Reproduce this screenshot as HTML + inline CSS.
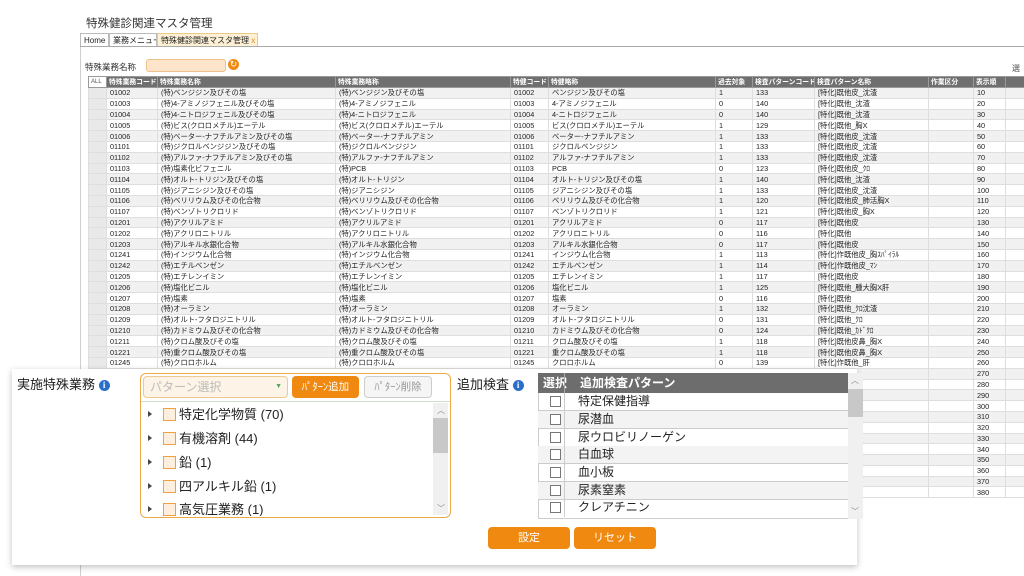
<!DOCTYPE html>
<html><head><meta charset="utf-8"><style>
*{box-sizing:border-box;margin:0;padding:0}
body{width:1024px;height:576px;overflow:hidden;background:#fff;font-family:"Liberation Sans","Noto Sans CJK JP",sans-serif;position:relative;color:#222}
.abs{position:absolute}
#title{left:86px;top:15px;font-size:11.5px;color:#333}
#win{left:80px;top:45px;width:944px;height:531px;border-left:1px solid #cfcfcf}
.tab{position:absolute;top:33px;height:14px;font-size:8px;line-height:13px;padding:0 3px;border:1px solid #bbb;border-bottom:none;background:#fff;white-space:nowrap;overflow:hidden}
#grid{position:absolute;left:88px;top:76px;border-collapse:collapse;table-layout:fixed;width:936px;font-size:7.3px}
#grid td{height:10.8px;line-height:9px;padding:0 3px;border:1px solid #dedede;white-space:nowrap;overflow:hidden}
#grid tr:nth-child(even) td{background:#f1f1f1}
#grid tr.h td{background:#6f6f6f;color:#fff;font-weight:bold;height:11px;border-color:#999;font-size:6.8px;padding:0 2px}
#grid td.rh{background:#e9e9e9!important}
#panel{left:12px;top:369px;width:845px;height:196px;background:#fff;box-shadow:0 2px 6px rgba(0,0,0,.25)}
.lbl{font-size:13px;color:#222}
.info{display:inline-block;width:11px;height:11px;border-radius:50%;background:#2a6fc9;color:#fff;font-size:9px;line-height:11px;text-align:center;font-weight:bold;vertical-align:1px;font-family:"Liberation Serif",serif}
.ob{background:#f0890f;color:#fff;border-radius:4px;text-align:center;font-size:11px}
.tr{position:absolute;font-size:13px;height:16px;line-height:16px}
.tr i{display:inline-block;width:0;height:0;border-left:4px solid #444;border-top:3.5px solid transparent;border-bottom:3.5px solid transparent;margin-right:11px;vertical-align:2px}
.tr b{display:inline-block;width:13px;height:13px;border:1px solid #f0a040;background:#fdeedd;margin-right:3px;vertical-align:-2px}
.rr{position:absolute;left:538px;width:310px;height:17.7px;font-size:12px;line-height:17px;border-bottom:1px solid #ccc}
.rr b{position:absolute;left:12px;top:3px;width:11px;height:11px;border:1px solid #777;background:#fff}
.rr span{position:absolute;left:40px}
.rr:before{content:"";position:absolute;left:26px;top:0;bottom:0;border-left:1px solid #ccc}
</style></head><body>
<div class="abs" id="title">特殊健診関連マスタ管理</div>
<div class="abs" id="win"></div>
<div class="tab" style="left:80px;width:29px">Home</div>
<div class="tab" style="left:109px;width:48px">業務メニュー</div>
<div class="tab" style="left:157px;width:101px;background:#fdf0d5;border-color:#e8c98a">特殊健診関連マスタ管理 <span style="color:#e88a20">x</span></div>
<div class="abs" style="left:80px;top:46px;width:944px;border-top:1px solid #aaa"></div>
<div class="abs" style="left:85px;top:61px;font-size:8.5px;color:#333">特殊業務名称</div>
<div class="abs" style="left:146px;top:59px;width:80px;height:13px;background:#fde5cc;border:1px solid #f0c08a;border-radius:3px"></div>
<div class="abs" style="left:228px;top:59px;width:11px;height:11px;border-radius:50%;background:#f0890f;color:#fff;font-size:9px;line-height:11px;text-align:center">↻</div>
<div class="abs" style="left:1012px;top:63px;font-size:8px;color:#444">選</div>
<table id="grid">
<colgroup><col style="width:18px"><col style="width:51px"><col style="width:178px"><col style="width:175px"><col style="width:38px"><col style="width:167px"><col style="width:37px"><col style="width:62px"><col style="width:114px"><col style="width:45px"><col style="width:32px"><col style="width:19px"></colgroup>
<tr class="h"><td style="background:#fff;color:#555;font-weight:normal;font-size:6px;padding:0 2px">ALL</td><td>特殊業務コード</td><td>特殊業務名称</td><td>特殊業務略称</td><td>特健コード</td><td>特健略称</td><td>過去対象</td><td>検査パターンコード</td><td>検査パターン名称</td><td>作業区分</td><td>表示順</td><td></td></tr>
<tr><td class="rh"></td><td>01002</td><td>(特)ベンジジン及びその塩</td><td>(特)ベンジジン及びその塩</td><td>01002</td><td>ベンジジン及びその塩</td><td>1</td><td>133</td><td>[特化]既他皮_沈渣</td><td></td><td>10</td><td></td></tr>
<tr><td class="rh"></td><td>01003</td><td>(特)4-アミノジフェニル及びその塩</td><td>(特)4-アミノジフェニル</td><td>01003</td><td>4-アミノジフェニル</td><td>0</td><td>140</td><td>[特化]既他_沈渣</td><td></td><td>20</td><td></td></tr>
<tr><td class="rh"></td><td>01004</td><td>(特)4-ニトロジフェニル及びその塩</td><td>(特)4-ニトロジフェニル</td><td>01004</td><td>4-ニトロジフェニル</td><td>0</td><td>140</td><td>[特化]既他_沈渣</td><td></td><td>30</td><td></td></tr>
<tr><td class="rh"></td><td>01005</td><td>(特)ビス(クロロメチル)エーテル</td><td>(特)ビス(クロロメチル)エーテル</td><td>01005</td><td>ビス(クロロメチル)エーテル</td><td>1</td><td>129</td><td>[特化]既他_胸X</td><td></td><td>40</td><td></td></tr>
<tr><td class="rh"></td><td>01006</td><td>(特)ベーター-ナフチルアミン及びその塩</td><td>(特)ベーター-ナフチルアミン</td><td>01006</td><td>ベーター-ナフチルアミン</td><td>1</td><td>133</td><td>[特化]既他皮_沈渣</td><td></td><td>50</td><td></td></tr>
<tr><td class="rh"></td><td>01101</td><td>(特)ジクロルベンジジン及びその塩</td><td>(特)ジクロルベンジジン</td><td>01101</td><td>ジクロルベンジジン</td><td>1</td><td>133</td><td>[特化]既他皮_沈渣</td><td></td><td>60</td><td></td></tr>
<tr><td class="rh"></td><td>01102</td><td>(特)アルファ-ナフチルアミン及びその塩</td><td>(特)アルファ-ナフチルアミン</td><td>01102</td><td>アルファ-ナフチルアミン</td><td>1</td><td>133</td><td>[特化]既他皮_沈渣</td><td></td><td>70</td><td></td></tr>
<tr><td class="rh"></td><td>01103</td><td>(特)塩素化ビフェニル</td><td>(特)PCB</td><td>01103</td><td>PCB</td><td>0</td><td>123</td><td>[特化]既他皮_ｸﾛ</td><td></td><td>80</td><td></td></tr>
<tr><td class="rh"></td><td>01104</td><td>(特)オルト-トリジン及びその塩</td><td>(特)オルト-トリジン</td><td>01104</td><td>オルト-トリジン及びその塩</td><td>1</td><td>140</td><td>[特化]既他_沈渣</td><td></td><td>90</td><td></td></tr>
<tr><td class="rh"></td><td>01105</td><td>(特)ジアニシジン及びその塩</td><td>(特)ジアニシジン</td><td>01105</td><td>ジアニシジン及びその塩</td><td>1</td><td>133</td><td>[特化]既他皮_沈渣</td><td></td><td>100</td><td></td></tr>
<tr><td class="rh"></td><td>01106</td><td>(特)ベリリウム及びその化合物</td><td>(特)ベリリウム及びその化合物</td><td>01106</td><td>ベリリウム及びその化合物</td><td>1</td><td>120</td><td>[特化]既他皮_肺活胸X</td><td></td><td>110</td><td></td></tr>
<tr><td class="rh"></td><td>01107</td><td>(特)ベンゾトリクロリド</td><td>(特)ベンゾトリクロリド</td><td>01107</td><td>ベンゾトリクロリド</td><td>1</td><td>121</td><td>[特化]既他皮_胸X</td><td></td><td>120</td><td></td></tr>
<tr><td class="rh"></td><td>01201</td><td>(特)アクリルアミド</td><td>(特)アクリルアミド</td><td>01201</td><td>アクリルアミド</td><td>0</td><td>117</td><td>[特化]既他皮</td><td></td><td>130</td><td></td></tr>
<tr><td class="rh"></td><td>01202</td><td>(特)アクリロニトリル</td><td>(特)アクリロニトリル</td><td>01202</td><td>アクリロニトリル</td><td>0</td><td>116</td><td>[特化]既他</td><td></td><td>140</td><td></td></tr>
<tr><td class="rh"></td><td>01203</td><td>(特)アルキル水銀化合物</td><td>(特)アルキル水銀化合物</td><td>01203</td><td>アルキル水銀化合物</td><td>0</td><td>117</td><td>[特化]既他皮</td><td></td><td>150</td><td></td></tr>
<tr><td class="rh"></td><td>01241</td><td>(特)インジウム化合物</td><td>(特)インジウム化合物</td><td>01241</td><td>インジウム化合物</td><td>1</td><td>113</td><td>[特化]作既他皮_胸ｽﾊﾟｲﾗﾙ</td><td></td><td>160</td><td></td></tr>
<tr><td class="rh"></td><td>01242</td><td>(特)エチルベンゼン</td><td>(特)エチルベンゼン</td><td>01242</td><td>エチルベンゼン</td><td>1</td><td>114</td><td>[特化]作既他皮_ﾏﾝ</td><td></td><td>170</td><td></td></tr>
<tr><td class="rh"></td><td>01205</td><td>(特)エチレンイミン</td><td>(特)エチレンイミン</td><td>01205</td><td>エチレンイミン</td><td>1</td><td>117</td><td>[特化]既他皮</td><td></td><td>180</td><td></td></tr>
<tr><td class="rh"></td><td>01206</td><td>(特)塩化ビニル</td><td>(特)塩化ビニル</td><td>01206</td><td>塩化ビニル</td><td>1</td><td>125</td><td>[特化]既他_腫大胸X肝</td><td></td><td>190</td><td></td></tr>
<tr><td class="rh"></td><td>01207</td><td>(特)塩素</td><td>(特)塩素</td><td>01207</td><td>塩素</td><td>0</td><td>116</td><td>[特化]既他</td><td></td><td>200</td><td></td></tr>
<tr><td class="rh"></td><td>01208</td><td>(特)オーラミン</td><td>(特)オーラミン</td><td>01208</td><td>オーラミン</td><td>1</td><td>132</td><td>[特化]既他_ｸﾛ沈渣</td><td></td><td>210</td><td></td></tr>
<tr><td class="rh"></td><td>01209</td><td>(特)オルト-フタロジニトリル</td><td>(特)オルト-フタロジニトリル</td><td>01209</td><td>オルト-フタロジニトリル</td><td>0</td><td>131</td><td>[特化]既他_ｸﾛ</td><td></td><td>220</td><td></td></tr>
<tr><td class="rh"></td><td>01210</td><td>(特)カドミウム及びその化合物</td><td>(特)カドミウム及びその化合物</td><td>01210</td><td>カドミウム及びその化合物</td><td>0</td><td>124</td><td>[特化]既他_ｶﾄﾞｸﾛ</td><td></td><td>230</td><td></td></tr>
<tr><td class="rh"></td><td>01211</td><td>(特)クロム酸及びその塩</td><td>(特)クロム酸及びその塩</td><td>01211</td><td>クロム酸及びその塩</td><td>1</td><td>118</td><td>[特化]既他皮鼻_胸X</td><td></td><td>240</td><td></td></tr>
<tr><td class="rh"></td><td>01221</td><td>(特)重クロム酸及びその塩</td><td>(特)重クロム酸及びその塩</td><td>01221</td><td>重クロム酸及びその塩</td><td>1</td><td>118</td><td>[特化]既他皮鼻_胸X</td><td></td><td>250</td><td></td></tr>
<tr><td class="rh"></td><td>01245</td><td>(特)クロロホルム</td><td>(特)クロロホルム</td><td>01245</td><td>クロロホルム</td><td>0</td><td>139</td><td>[特化]作既他_肝</td><td></td><td>260</td><td></td></tr>
<tr><td class="rh"></td><td></td><td></td><td></td><td></td><td></td><td></td><td></td><td></td><td></td><td>270</td><td></td></tr>
<tr><td class="rh"></td><td></td><td></td><td></td><td></td><td></td><td></td><td></td><td></td><td></td><td>280</td><td></td></tr>
<tr><td class="rh"></td><td></td><td></td><td></td><td></td><td></td><td></td><td></td><td></td><td></td><td>290</td><td></td></tr>
<tr><td class="rh"></td><td></td><td></td><td></td><td></td><td></td><td></td><td></td><td></td><td></td><td>300</td><td></td></tr>
<tr><td class="rh"></td><td></td><td></td><td></td><td></td><td></td><td></td><td></td><td></td><td></td><td>310</td><td></td></tr>
<tr><td class="rh"></td><td></td><td></td><td></td><td></td><td></td><td></td><td></td><td></td><td></td><td>320</td><td></td></tr>
<tr><td class="rh"></td><td></td><td></td><td></td><td></td><td></td><td></td><td></td><td></td><td></td><td>330</td><td></td></tr>
<tr><td class="rh"></td><td></td><td></td><td></td><td></td><td></td><td></td><td></td><td></td><td></td><td>340</td><td></td></tr>
<tr><td class="rh"></td><td></td><td></td><td></td><td></td><td></td><td></td><td></td><td></td><td></td><td>350</td><td></td></tr>
<tr><td class="rh"></td><td></td><td></td><td></td><td></td><td></td><td></td><td></td><td></td><td></td><td>360</td><td></td></tr>
<tr><td class="rh"></td><td></td><td></td><td></td><td></td><td></td><td></td><td></td><td></td><td></td><td>370</td><td></td></tr>
<tr><td class="rh"></td><td></td><td></td><td></td><td></td><td></td><td></td><td></td><td></td><td></td><td>380</td><td></td></tr>
</table>

<div class="abs" id="panel"></div>
<div class="abs lbl" style="left:17px;top:374px">実施特殊業務 <span class="info">i</span></div>
<div class="abs" style="left:140px;top:373px;width:311px;height:145px;border:1.5px solid #eea848;border-radius:6px;background:#fff"></div>
<div class="abs" style="left:143px;top:376px;width:145px;height:22px;border:1px solid #f0c890;border-radius:4px;background:#fdf3e6;font-size:12px;color:#bbb;line-height:20px;padding-left:6px">パターン選択<span style="position:absolute;right:5px;color:#5a5;font-size:7px">▼</span></div>
<div class="abs ob" style="left:292px;top:376px;width:67px;height:22px;line-height:22px;font-size:10.5px">ﾊﾟﾀｰﾝ追加</div>
<div class="abs" style="left:364px;top:376px;width:68px;height:22px;line-height:20px;font-size:10.5px;border:1px solid #ccc;border-radius:4px;background:#f5f5f5;color:#999;text-align:center">ﾊﾟﾀｰﾝ削除</div>
<div class="abs" style="left:141px;top:401px;width:309px;border-top:1px solid #cfe0c8"></div>
<div class="abs" style="left:433px;top:403px;width:15px;height:112px;background:#f0f0f0"></div>
<div class="abs" style="left:433px;top:418px;width:15px;height:35px;background:#c8c8c8"></div>
<div class="abs" style="left:437px;top:405px;font-size:8px;color:#888">︿</div>
<div class="abs" style="left:437px;top:503px;font-size:8px;color:#888">﹀</div>
<div style="position:absolute;left:141px;top:402px;width:292px;height:114px;overflow:hidden">
<div class="tr" style="left:7px;top:5px"><i></i><b></b>特定化学物質 (70)</div>
<div class="tr" style="left:7px;top:29px"><i></i><b></b>有機溶剤 (44)</div>
<div class="tr" style="left:7px;top:53px"><i></i><b></b>鉛 (1)</div>
<div class="tr" style="left:7px;top:77px"><i></i><b></b>四アルキル鉛 (1)</div>
<div class="tr" style="left:7px;top:100px"><i></i><b></b>高気圧業務 (1)</div>
</div>

<div class="abs lbl" style="left:457px;top:374px">追加検査 <span class="info">i</span></div>
<div class="abs" style="left:538px;top:373px;width:325px;height:146px;border:1px solid #ccc;background:#fff"></div>
<div class="abs" style="left:538px;top:373px;width:310px;height:20px;background:#6d6d6d;color:#fff;font-size:12px;font-weight:bold;line-height:20px"><span style="position:absolute;left:5px">選択</span><span style="position:absolute;left:26px;top:0;bottom:0;border-left:1px solid #aaa"></span><span style="position:absolute;left:42px">追加検査パターン</span></div>
<div class="rr" style="top:393px"><b></b><span>特定保健指導</span></div>
<div class="rr" style="top:411px;background:#f3f3f3"><b></b><span>尿潜血</span></div>
<div class="rr" style="top:429px"><b></b><span>尿ウロビリノーゲン</span></div>
<div class="rr" style="top:446px;background:#f3f3f3"><b></b><span>白血球</span></div>
<div class="rr" style="top:464px"><b></b><span>血小板</span></div>
<div class="rr" style="top:482px;background:#f3f3f3"><b></b><span>尿素窒素</span></div>
<div class="rr" style="top:499px;border-bottom:none"><b></b><span>クレアチニン</span></div>
<div class="abs" style="left:848px;top:373px;width:15px;height:146px;background:#f0f0f0"></div>
<div class="abs" style="left:848px;top:389px;width:15px;height:28px;background:#c8c8c8"></div>
<div class="abs" style="left:851px;top:375px;font-size:8px;color:#888">︿</div>
<div class="abs" style="left:851px;top:506px;font-size:8px;color:#888">﹀</div>

<div class="abs ob" style="left:488px;top:527px;width:82px;height:22px;line-height:22px">設定</div>
<div class="abs ob" style="left:574px;top:527px;width:82px;height:22px;line-height:22px">リセット</div>
</body></html>
